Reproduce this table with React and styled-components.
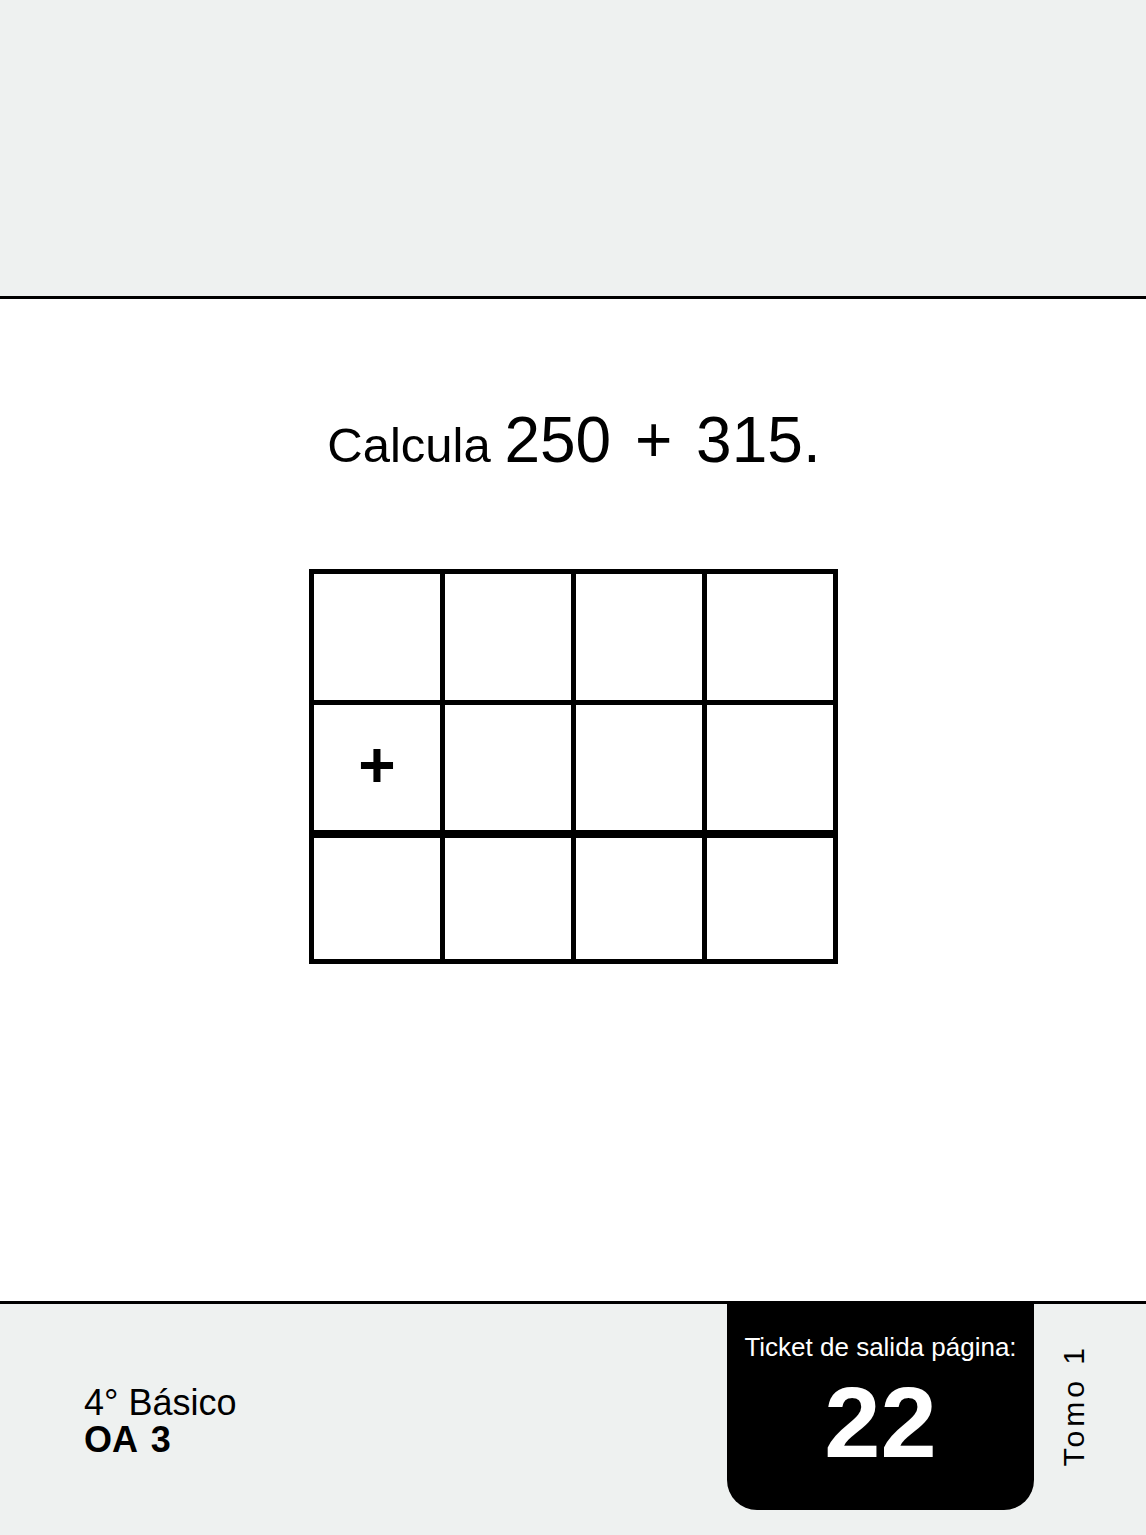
import React from 'react';
import styled, { createGlobalStyle } from 'styled-components';

const GlobalStyle = createGlobalStyle`
  html, body {
    margin: 0;
    padding: 0;
    background: #ffffff;
  }
  body {
    font-family: "Liberation Sans", Arial, sans-serif;
    color: #000000;
  }
`;

const rows = [
  ['', '', '', ''],
  ['+', '', '', ''],
  ['', '', '', ''],
];

export default function App() {
  return (
    <Page>
      <GlobalStyle />
      <TopBand />
      <Main>
        <Prompt>
          <Word>Calcula </Word>
          250 + 315.
        </Prompt>
        <Board>
          {rows.map((row, r) =>
            row.map((value, c) => (
              <Cell key={`${r}-${c}`} isResult={r === 2}>
                {value}
              </Cell>
            ))
          )}
        </Board>
      </Main>
      <Footer>
        <Level>
          <Grade>4° Básico</Grade>
          <Objective>OA 3</Objective>
        </Level>
        <Ticket>
          <TicketLabel>Ticket de salida página:</TicketLabel>
          <TicketNumber>22</TicketNumber>
        </Ticket>
        <TomoColumn>
          <Tomo>Tomo 1</Tomo>
        </TomoColumn>
      </Footer>
    </Page>
  );
}

const Page = styled.div`
  width: 1146px;
  height: 1535px;
  display: flex;
  flex-direction: column;
  overflow: hidden;
`;

const TopBand = styled.div`
  height: 296px;
  flex-shrink: 0;
  background: #eef1f0;
  border-bottom: 3px solid #000;
`;

const Main = styled.main`
  flex: 1;
  display: flex;
  flex-direction: column;
  align-items: center;
  padding-top: 109px;
  background: #fff;
`;

const Prompt = styled.div`
  font-size: 64px;
  line-height: 64px;
  white-space: pre;
  word-spacing: 6px;
  margin-left: 2px;
`;

const Word = styled.span`
  font-size: 49px;
  word-spacing: 0;
`;

const Board = styled.div`
  margin-top: 92px;
  margin-left: 1px;
  display: grid;
  grid-template-columns: repeat(4, 126px);
  grid-template-rows: 126px 125px 124px;
  gap: 5px;
  padding: 5px;
  background: #000;
`;

const Cell = styled.div`
  background: #fff;
  display: flex;
  align-items: center;
  justify-content: center;
  font-size: 64px;
  font-weight: 700;
  line-height: 1;
  margin-top: ${({ isResult }) => (isResult ? '3px' : '0')};
  padding-bottom: 6px;
`;

const Footer = styled.footer`
  height: 231px;
  flex-shrink: 0;
  display: flex;
  background: #eef1f0;
  border-top: 3px solid #000;
`;

const Level = styled.div`
  flex: 1;
  padding: 80px 0 0 84px;
`;

const Grade = styled.div`
  font-size: 36px;
  line-height: 37px;
`;

const Objective = styled.div`
  font-size: 36px;
  line-height: 37px;
  font-weight: 700;
  word-spacing: 4px;
`;

const Ticket = styled.div`
  width: 307px;
  height: 206px;
  box-sizing: border-box;
  padding-top: 28px;
  background: #000;
  color: #fff;
  border-radius: 0 0 30px 30px;
  text-align: center;
`;

const TicketLabel = styled.div`
  font-size: 26px;
  line-height: 30px;
`;

const TicketNumber = styled.div`
  margin-top: 10px;
  font-size: 101px;
  line-height: 100px;
  font-weight: 700;
`;

const TomoColumn = styled.div`
  width: 112px;
  display: flex;
  align-items: flex-start;
  padding: 40px 0 0 25px;
  box-sizing: border-box;
`;

const Tomo = styled.div`
  writing-mode: vertical-rl;
  transform: rotate(180deg);
  font-size: 30px;
  line-height: 30px;
  letter-spacing: 4px;
`;
